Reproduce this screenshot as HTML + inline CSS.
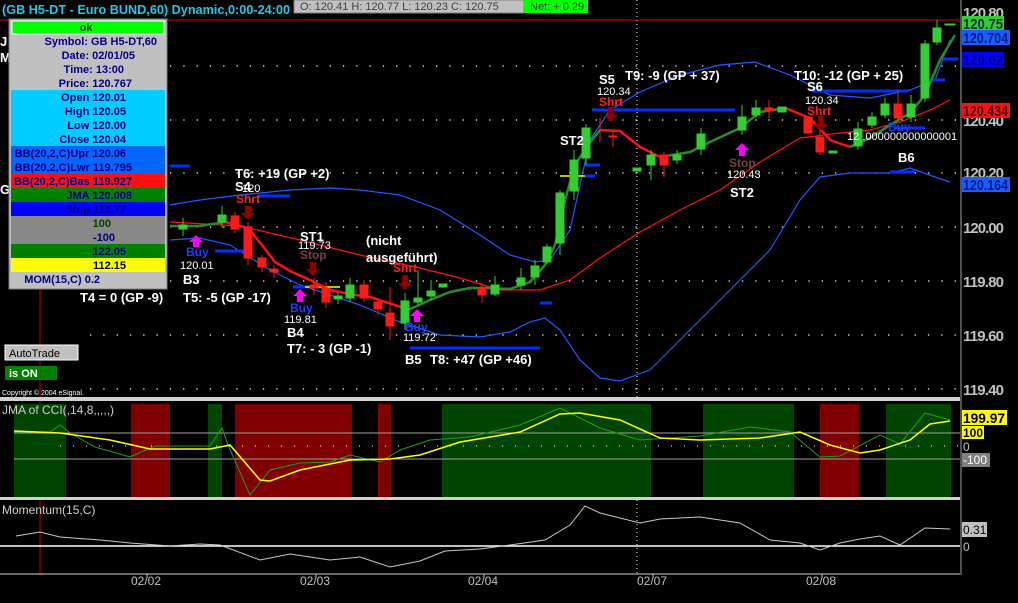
<!DOCTYPE html>
<html><head><meta charset="utf-8"><style>
body{margin:0;background:#000;width:1018px;height:603px;overflow:hidden;font-family:"Liberation Sans",Arial,sans-serif}
svg{display:block}
.w{fill:#fff;font-weight:bold;font-size:13px}
.s{fill:#fff;font-size:11px}
.ax{fill:#c0c0c0;font-weight:bold;font-size:15px}
.ib{font-size:11px;font-weight:bold;fill:#000080}
.bx{font-size:15px;font-weight:bold}
</style></head><body>
<svg width="1018" height="603" viewBox="0 0 1018 603" font-family="Liberation Sans, Arial, sans-serif">
<rect width="1018" height="603" fill="#000"/>
<g stroke="#fff" stroke-width="1.3" stroke-dasharray="1.3 12">
<line x1="170" y1="66" x2="960" y2="66"/><line x1="170" y1="120" x2="960" y2="120"/>
<line x1="170" y1="173" x2="960" y2="173"/><line x1="170" y1="227" x2="960" y2="227"/>
<line x1="170" y1="281" x2="960" y2="281"/><line x1="90" y1="335" x2="960" y2="335"/>
<line x1="90" y1="389" x2="960" y2="389"/>
</g>
<line x1="637" y1="0" x2="637" y2="575" stroke="#fff" stroke-dasharray="1 3"/>
<line x1="0" y1="20" x2="960" y2="20" stroke="#e00000"/>
<line x1="40" y1="20" x2="40" y2="575" stroke="#c00000"/>
<polyline fill="none" stroke="#1e5aff" stroke-width="1.2" points="170,205 200,200 240,195 290,190 330,188 360,190 400,195 440,210 480,235 510,255 535,262 550,260 570,230 590,140 610,110 640,92 680,75 720,65 755,62 790,75 830,95 870,98 910,90 935,80 950,40"/>
<polyline fill="none" stroke="#1e5aff" stroke-width="1.2" points="170,240 200,238 230,245 270,270 300,285 330,295 360,305 400,322 440,335 480,337 510,332 530,322 545,318 560,330 580,360 600,378 620,381 650,370 690,330 730,290 770,250 800,200 820,177 850,173 890,173 910,168 935,177 950,182"/>
<polyline fill="none" stroke="#ff1010" stroke-width="1.2" points="170,222 240,226 300,240 360,255 420,268 460,278 500,290 540,290 570,280 600,258 640,232 680,210 720,190 760,162 800,138 840,133 870,130 900,122 930,110 950,100"/>
<g stroke="#0030ff" stroke-width="3">
<line x1="170" y1="166" x2="190" y2="166"/><line x1="215" y1="251" x2="245" y2="251"/><line x1="258" y1="196" x2="290" y2="196"/>
<line x1="293" y1="287" x2="310" y2="287"/><line x1="410" y1="348" x2="540" y2="348"/><line x1="540" y1="303" x2="552" y2="303"/>
<line x1="592" y1="110" x2="735" y2="110"/><line x1="585" y1="165" x2="600" y2="165"/><line x1="585" y1="176" x2="595" y2="176"/>
<line x1="812" y1="91" x2="908" y2="91"/><line x1="895" y1="128" x2="925" y2="128"/><line x1="890" y1="172" x2="915" y2="172"/>
<line x1="943" y1="59" x2="958" y2="59"/><line x1="930" y1="80" x2="945" y2="80"/>
</g>
<line x1="305" y1="287" x2="340" y2="287" stroke="#ff0" stroke-width="1.5"/>
<line x1="560" y1="176" x2="585" y2="176" stroke="#ff0" stroke-width="1.5"/>
<polyline fill="none" stroke="#2a8a2a" stroke-width="2.5" points="170,226 200,226 225,222"/>
<polyline fill="none" stroke="#ff1010" stroke-width="2.5" points="225,222 248,228 262,245 275,262 290,271 310,280 330,290 350,294 370,297 395,305 408,310"/>
<polyline fill="none" stroke="#2a8a2a" stroke-width="2.5" points="408,310 430,300 450,292 470,288 490,288 510,289 530,282 545,265 555,245 565,200 575,165 588,145 600,130"/>
<polyline fill="none" stroke="#ff1010" stroke-width="2.5" points="600,130 620,131 640,147 660,157"/>
<polyline fill="none" stroke="#2a8a2a" stroke-width="2.5" points="660,157 690,152 710,142 740,128 760,112 785,108"/>
<polyline fill="none" stroke="#ff1010" stroke-width="2.5" points="785,108 810,118 830,140 850,147"/>
<polyline fill="none" stroke="#2a8a2a" stroke-width="2.5" points="850,147 870,138 890,125 910,113 925,95 940,60 955,35"/>
<g stroke-width="1">
<g fill="#33cc33" stroke="#33cc33">
<line x1="183" y1="218" x2="183" y2="236"/><rect x="179" y="225" width="8" height="4"/>
<line x1="222" y1="206" x2="222" y2="228"/><rect x="218" y="215" width="8" height="7"/>
<line x1="338" y1="293" x2="338" y2="304"/><rect x="334" y="296" width="8" height="3"/>
<line x1="350" y1="278" x2="350" y2="302"/><rect x="346" y="285" width="8" height="13"/>
<line x1="405" y1="293" x2="405" y2="330"/><rect x="401" y="301" width="8" height="22"/>
<line x1="418" y1="270" x2="418" y2="305"/><rect x="414" y="298" width="8" height="4"/>
<line x1="431" y1="280" x2="431" y2="300"/><rect x="427" y="291" width="8" height="5"/>
<rect x="439" y="284" width="8" height="3"/>
<line x1="495" y1="276" x2="495" y2="296"/><rect x="491" y="285" width="8" height="9"/>
<line x1="521" y1="268" x2="521" y2="290"/><rect x="517" y="278" width="8" height="7"/>
<line x1="535" y1="260" x2="535" y2="285"/><rect x="531" y="266" width="8" height="11"/>
<line x1="547" y1="244" x2="547" y2="264"/><rect x="543" y="247" width="8" height="15"/>
<line x1="560" y1="190" x2="560" y2="255"/><rect x="556" y="193" width="8" height="50"/>
<line x1="574" y1="150" x2="574" y2="200"/><rect x="570" y="160" width="8" height="31"/>
<line x1="586" y1="124" x2="586" y2="165"/><rect x="582" y="128" width="8" height="30"/>
<rect x="633" y="168" width="8" height="3"/>
<line x1="651" y1="150" x2="651" y2="180"/><rect x="647" y="155" width="8" height="10"/>
<line x1="677" y1="150" x2="677" y2="164"/><rect x="673" y="155" width="8" height="5"/>
<line x1="701" y1="128" x2="701" y2="155"/><rect x="697" y="134" width="8" height="15"/>
<line x1="742" y1="105" x2="742" y2="135"/><rect x="738" y="117" width="8" height="13"/>
<line x1="756" y1="100" x2="756" y2="118"/><rect x="752" y="108" width="8" height="7"/>
<rect x="778" y="107" width="8" height="5"/>
<rect x="829" y="151" width="8" height="2"/>
<line x1="858" y1="122" x2="858" y2="150"/><rect x="854" y="129" width="8" height="17"/>
<line x1="872" y1="112" x2="872" y2="128"/><rect x="868" y="117" width="8" height="8"/>
<line x1="885" y1="98" x2="885" y2="118"/><rect x="881" y="104" width="8" height="11"/>
<line x1="911" y1="95" x2="911" y2="122"/><rect x="907" y="104" width="8" height="13"/>
<line x1="925" y1="40" x2="925" y2="102"/><rect x="921" y="44" width="8" height="54"/>
<line x1="937" y1="20" x2="937" y2="45"/><rect x="933" y="28" width="8" height="14"/>
<rect x="945" y="24" width="10" height="1"/>
</g>
<g fill="#ff1a1a" stroke="#ff1a1a">
<line x1="235" y1="212" x2="235" y2="233"/><rect x="231" y="216" width="8" height="13"/>
<line x1="248" y1="222" x2="248" y2="265"/><rect x="244" y="227" width="8" height="31"/>
<line x1="262" y1="255" x2="262" y2="272"/><rect x="258" y="258" width="8" height="9"/>
<line x1="274" y1="265" x2="274" y2="278"/><rect x="270" y="269" width="8" height="3"/>
<line x1="314" y1="278" x2="314" y2="295"/><rect x="310" y="285" width="8" height="3"/>
<line x1="326" y1="282" x2="326" y2="308"/><rect x="322" y="288" width="8" height="14"/>
<line x1="364" y1="280" x2="364" y2="302"/><rect x="360" y="285" width="8" height="13"/>
<line x1="378" y1="298" x2="378" y2="315"/><rect x="374" y="302" width="8" height="7"/>
<line x1="390" y1="287" x2="390" y2="340"/><rect x="386" y="313" width="8" height="13"/>
<line x1="482" y1="283" x2="482" y2="303"/><rect x="478" y="288" width="8" height="7"/>
<line x1="600" y1="118" x2="600" y2="142"/><line x1="613" y1="130" x2="613" y2="147"/><rect x="609" y="136" width="8" height="1"/>
<line x1="664" y1="152" x2="664" y2="177"/><rect x="660" y="155" width="8" height="10"/>
<line x1="769" y1="100" x2="769" y2="118"/><rect x="765" y="108" width="8" height="3"/>
<rect x="804" y="117" width="8" height="16"/>
<line x1="820" y1="130" x2="820" y2="155"/><rect x="816" y="137" width="8" height="15"/>
<line x1="898" y1="90" x2="898" y2="120"/><rect x="894" y="104" width="8" height="14"/>
</g>
</g>
<g fill="#ff00ff">
<path d="M196,235 l7,7 h-4 v5 h-6 v-5 h-4z"/><path d="M300,289 l7,7 h-4 v6 h-6 v-6 h-4z"/>
<path d="M417,309 l7,7 h-4 v6 h-6 v-6 h-4z"/><path d="M742,143 l7,7 h-4 v6 h-6 v-6 h-4z"/>
</g>
<g fill="#8b0000">
<path d="M248,220 l7,-7 h-4 v-7 h-6 v7 h-4z"/><path d="M313,276 l7,-7 h-4 v-7 h-6 v7 h-4z"/>
<path d="M405,290 l7,-7 h-4 v-8 h-6 v8 h-4z"/><path d="M611,122 l7,-7 h-4 v-8 h-6 v8 h-4z"/>
<path d="M821,131 l7,-7 h-4 v-8 h-6 v8 h-4z"/>
</g>
<text class="w" x="235" y="178">T6: +19 (GP +2)</text>
<text class="w" x="235" y="191">S4</text><text class="s" x="242" y="192">120</text>
<text x="236" y="203" font-size="12" font-weight="bold" fill="#ff2020">Shrt</text>
<text x="186" y="256" font-size="12" font-weight="bold" fill="#1e3cff">Buy</text>
<text class="s" x="180" y="269">120.01</text>
<text class="w" x="183" y="284">B3</text>
<text class="w" x="183" y="302">T5: -5 (GP -17)</text>
<text class="w" x="80" y="302">T4 = 0 (GP -9)</text>
<text class="w" x="300" y="241">ST1</text><text class="s" x="298" y="249">119.73</text>
<text x="300" y="259" font-size="12" font-weight="bold" fill="#7a4040">Stop</text>
<text x="290" y="312" font-size="12" font-weight="bold" fill="#1e3cff">Buy</text>
<text class="s" x="284" y="323">119.81</text>
<text class="w" x="287" y="337">B4</text>
<text class="w" x="287" y="353">T7: - 3 (GP -1)</text>
<text class="w" x="366" y="245">(nicht</text>
<text class="w" x="366" y="262">ausgeführt)</text>
<text x="393" y="272" font-size="12" font-weight="bold" fill="#ff2020">Shrt</text>
<text x="405" y="331" font-size="12" font-weight="bold" fill="#1e3cff">Buy</text>
<text class="s" x="403" y="341">119.72</text>
<text class="w" x="405" y="364">B5</text><text class="w" x="430" y="364">T8: +47 (GP +46)</text>
<text class="w" x="560" y="145">ST2</text>
<text class="w" x="599" y="84">S5</text><text class="s" x="597" y="95">120.34</text>
<text x="599" y="106" font-size="12" font-weight="bold" fill="#ff2020">Shrt</text>
<text class="w" x="625" y="80">T9: -9 (GP + 37)</text>
<text x="729" y="167" font-size="12" font-weight="bold" fill="#7a4040">Stop</text>
<text class="s" x="727" y="178">120.43</text>
<text class="w" x="730" y="197">ST2</text>
<text class="w" x="794" y="80">T10: -12 (GP + 25)</text>
<text class="w" x="807" y="91">S6</text><text class="s" x="805" y="104">120.34</text>
<text x="807" y="115" font-size="12" font-weight="bold" fill="#ff2020">Shrt</text>
<text x="888" y="131" font-size="12" font-weight="bold" fill="#1e3cff">Buy</text>
<text class="s" x="847" y="140">12  .000000000000001</text>
<text class="w" x="898" y="162">B6</text>
<text class="w" x="0" y="46">J</text><text class="w" x="0" y="62">M</text><text class="w" x="0" y="194">G</text>
<text x="2" y="14" font-size="13" font-weight="bold" fill="#20c8e8" textLength="288" lengthAdjust="spacingAndGlyphs">(GB H5-DT - Euro BUND,60) Dynamic,0:00-24:00</text>
<rect x="294" y="0" width="230" height="13" fill="#c0c0c0" stroke="#808080"/>
<text x="300" y="10" font-size="11" fill="#404040">O: 120.41   H: 120.77   L: 120.23   C: 120.75</text>
<rect x="524" y="0" width="64" height="13" fill="#00ff00"/>
<text x="530" y="10" font-size="11" fill="#404040">Net: + 0.29</text>
<rect x="9" y="19" width="158" height="270" fill="#c0c0c0" stroke="#808080"/>
<rect x="12" y="21" width="152" height="13" fill="#00ff00" stroke="#fff"/>
<rect x="11" y="90" width="154" height="56" fill="#00ccff"/>
<rect x="11" y="146" width="154" height="28" fill="#0066ff"/>
<rect x="11" y="174" width="154" height="14" fill="#ff1010"/>
<rect x="11" y="188" width="154" height="14" fill="#008000"/>
<rect x="11" y="202" width="154" height="14" fill="#0000ff"/>
<rect x="11" y="216" width="154" height="28" fill="#888"/>
<rect x="11" y="244" width="154" height="14" fill="#008000"/>
<rect x="11" y="258" width="154" height="14" fill="#ffff00"/>
<g class="ib" text-anchor="end">
<text x="86" y="31" text-anchor="middle" fill="#004000">ok</text>
<text x="157" y="45">Symbol: GB H5-DT,60</text>
<text x="135" y="59">Date: 02/01/05</text>
<text x="124" y="73">Time: 13:00</text>
<text x="132" y="87">Price: 120.767</text>
<text x="126" y="101">Open 120.01</text>
<text x="126" y="115">High 120.05</text>
<text x="126" y="129">Low 120.00</text>
<text x="126" y="143">Close 120.04</text>
<text x="126" y="157">BB(20,2,C)Upr 120.06</text>
<text x="132" y="171">BB(20,2,C)Lwr 119.795</text>
<text x="132" y="185">BB(20,2,C)Bas 119.927</text>
<text x="132" y="199">JMA 120.008</text>
<text x="126" y="213">Stop 119.77</text>
<text x="111" y="227" fill="#004000">100</text>
<text x="115" y="241">-100</text>
<text x="126" y="255">122.05</text>
<text x="126" y="269" fill="#000">112.15</text>
<text x="100" y="283">MOM(15,C) 0.2</text>
</g>
<rect x="5" y="345" width="73" height="15" fill="#c0c0c0" stroke="#fff"/>
<text x="9" y="357" font-size="11" fill="#000">AutoTrade</text>
<rect x="5" y="366" width="52" height="14" fill="#008000"/>
<text x="9" y="377" font-size="11" font-weight="bold" fill="#fff">is ON</text>
<text x="2" y="395" font-size="7" fill="#fff">Copyright © 2004 eSignal.</text>
<line x1="961" y1="0" x2="961" y2="575" stroke="#a0a0a0"/>
<g class="ax" lengthAdjust="spacingAndGlyphs">
<text x="963" y="18" textLength="41">120.80</text><text x="963" y="126" textLength="41">120.40</text><text x="963" y="178" textLength="41">120.20</text>
<text x="963" y="233" textLength="41">120.00</text><text x="963" y="287" textLength="41">119.80</text><text x="963" y="341" textLength="41">119.60</text><text x="963" y="395" textLength="41">119.40</text>
</g>
<rect x="962" y="16" width="42" height="15" fill="#33cc33"/><text x="963" y="29" class="bx" fill="#203040" textLength="40" lengthAdjust="spacingAndGlyphs">120.75</text>
<rect x="962" y="30" width="48" height="15" fill="#1a5cff"/><text x="963" y="43" class="bx" fill="#002080" textLength="45" lengthAdjust="spacingAndGlyphs">120.704</text>
<rect x="962" y="52" width="42" height="15" fill="#0000ff"/><text x="963" y="65" class="bx" fill="#000080" textLength="40" lengthAdjust="spacingAndGlyphs">120.62</text>
<rect x="962" y="103" width="48" height="15" fill="#ff1010"/><text x="963" y="116" class="bx" fill="#400000" textLength="45" lengthAdjust="spacingAndGlyphs">120.434</text>
<rect x="962" y="177" width="48" height="15" fill="#1a5cff"/><text x="963" y="190" class="bx" fill="#002080" textLength="45" lengthAdjust="spacingAndGlyphs">120.164</text>
<rect x="0" y="397" width="960" height="4" fill="#d0d0d0"/>
<rect x="0" y="497" width="960" height="3" fill="#d0d0d0"/>
<line x1="0" y1="574" x2="960" y2="574" stroke="#d0d0d0"/>
<g>
<rect x="14" y="404" width="52" height="93" fill="#004400"/>
<rect x="131" y="404" width="39" height="93" fill="#800000"/>
<rect x="208" y="404" width="14" height="93" fill="#004400"/>
<rect x="235" y="404" width="117" height="93" fill="#800000"/>
<rect x="378" y="404" width="13" height="93" fill="#800000"/>
<rect x="442" y="404" width="209" height="93" fill="#004400"/>
<rect x="703" y="404" width="91" height="93" fill="#004400"/>
<rect x="820" y="404" width="39" height="93" fill="#800000"/>
<rect x="886" y="404" width="65" height="93" fill="#004400"/>
</g>
<line x1="14" y1="433" x2="960" y2="433" stroke="#a0a0a0"/>
<line x1="14" y1="459" x2="960" y2="459" stroke="#a0a0a0"/>
<line x1="60" y1="446" x2="960" y2="446" stroke="#fff" stroke-dasharray="1 12"/>
<polyline fill="none" stroke="#1aa01a" points="14,432 50,432 60,425 70,433 95,447 130,457 155,446 210,446 222,428 228,445 250,495 270,470 300,463 330,462 350,455 380,462 400,450 430,440 470,437 520,425 560,408 600,428 640,440 700,436 750,427 790,432 820,457 840,456 880,435 900,444 925,413 950,420"/>
<polyline fill="none" stroke="#ffff00" stroke-width="1.5" points="14,431 60,433 110,440 150,449 210,449 230,445 260,480 270,481 300,470 350,460 390,459 420,455 460,442 520,432 560,414 580,413 620,420 660,438 700,440 760,438 800,432 830,445 860,453 880,450 910,440 930,424 950,421"/>
<text x="2" y="414" font-size="12" fill="#d0d0d0">JMA of CCI(,14,8,,,,,)</text>
<rect x="962" y="410" width="45" height="15" fill="#ffff00"/><text x="963" y="423" font-size="14" font-weight="bold" fill="#000" textLength="42" lengthAdjust="spacingAndGlyphs">199.97</text>
<rect x="962" y="426" width="22" height="13" fill="#ffff00"/><text x="963" y="437" font-size="12" font-weight="bold" fill="#000">100</text>
<text x="963" y="451" font-size="12" fill="#c0c0c0">0</text>
<rect x="962" y="453" width="28" height="14" fill="#808080"/><text x="963" y="464" font-size="12" fill="#fff">-100</text>
<text x="2" y="514" font-size="12" fill="#d0d0d0">Momentum(15,C)</text>
<line x1="0" y1="546" x2="960" y2="546" stroke="#fff" stroke-width="1.5"/>
<polyline fill="none" stroke="#c8c8c8" points="16,536 40,532 60,537 100,540 130,543 170,546 200,544 220,545 260,560 290,554 330,560 360,557 390,567 420,561 445,551 480,549 510,545 545,540 570,525 585,506 600,513 620,518 640,523 660,519 700,517 740,523 770,540 800,543 820,550 840,543 860,539 880,536 900,545 925,528 950,529"/>
<rect x="962" y="522" width="25" height="15" fill="#c0c0c0"/><text x="963" y="534" font-size="12" fill="#000">0.31</text>
<text x="963" y="551" font-size="12" fill="#c0c0c0">0</text>
<g font-size="12" fill="#c0c0c0">
<text x="131" y="585">02/02</text><text x="300" y="585">02/03</text><text x="468" y="585">02/04</text>
<text x="637" y="585">02/07</text><text x="806" y="585">02/08</text>
</g>
<g stroke="#c0c0c0"><line x1="147" y1="574" x2="147" y2="578"/><line x1="316" y1="574" x2="316" y2="578"/><line x1="484" y1="574" x2="484" y2="578"/><line x1="653" y1="574" x2="653" y2="578"/><line x1="822" y1="574" x2="822" y2="578"/></g>
</svg>
</body></html>
